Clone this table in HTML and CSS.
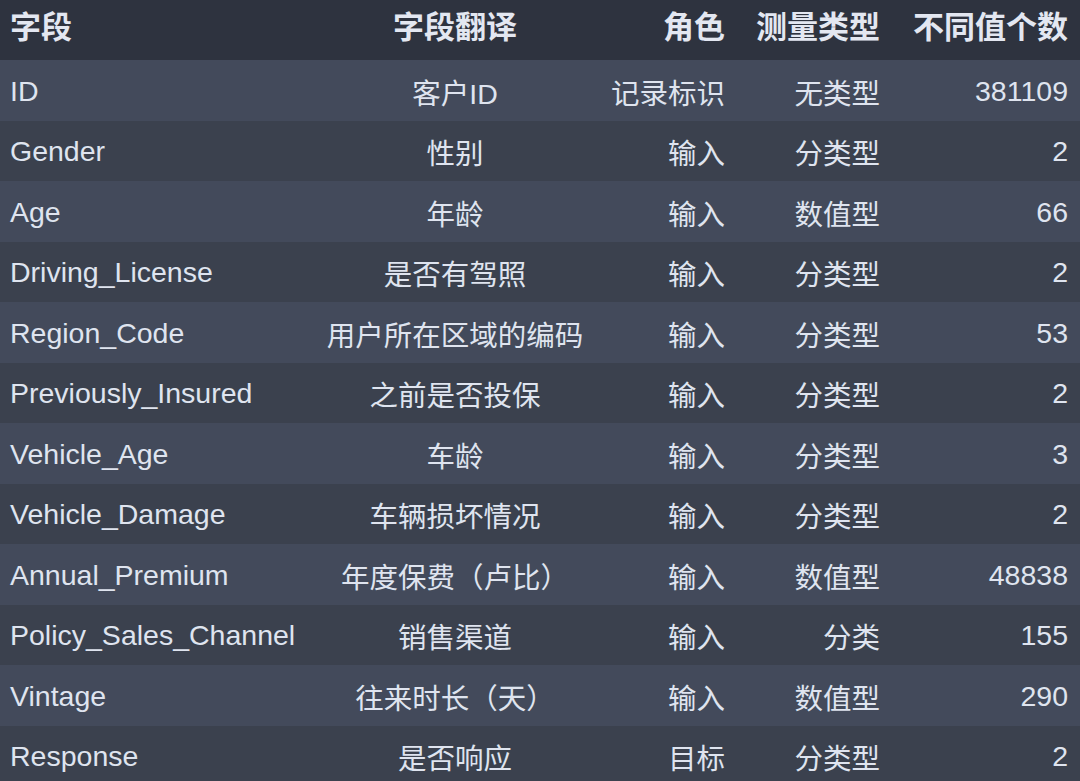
FILE: index.html
```html
<!DOCTYPE html>
<html lang="zh-CN">
<head>
<meta charset="utf-8">
<title>字段说明</title>
<link rel="stylesheet" href="styles.css">
</head>
<body>
<div class="table">
  <div class="row head">
    <div class="c1">字段</div><div class="c2">字段翻译</div><div class="c3">角色</div><div class="c4">测量类型</div><div class="c5">不同值个数</div>
  </div>
  <div class="row odd"><div class="c1">ID</div><div class="c2">客户ID</div><div class="c3">记录标识</div><div class="c4">无类型</div><div class="c5">381109</div></div>
  <div class="row even"><div class="c1">Gender</div><div class="c2">性别</div><div class="c3">输入</div><div class="c4">分类型</div><div class="c5">2</div></div>
  <div class="row odd"><div class="c1">Age</div><div class="c2">年龄</div><div class="c3">输入</div><div class="c4">数值型</div><div class="c5">66</div></div>
  <div class="row even"><div class="c1">Driving_License</div><div class="c2">是否有驾照</div><div class="c3">输入</div><div class="c4">分类型</div><div class="c5">2</div></div>
  <div class="row odd"><div class="c1">Region_Code</div><div class="c2">用户所在区域的编码</div><div class="c3">输入</div><div class="c4">分类型</div><div class="c5">53</div></div>
  <div class="row even"><div class="c1">Previously_Insured</div><div class="c2">之前是否投保</div><div class="c3">输入</div><div class="c4">分类型</div><div class="c5">2</div></div>
  <div class="row odd"><div class="c1">Vehicle_Age</div><div class="c2">车龄</div><div class="c3">输入</div><div class="c4">分类型</div><div class="c5">3</div></div>
  <div class="row even"><div class="c1">Vehicle_Damage</div><div class="c2">车辆损坏情况</div><div class="c3">输入</div><div class="c4">分类型</div><div class="c5">2</div></div>
  <div class="row odd"><div class="c1">Annual_Premium</div><div class="c2">年度保费（卢比）</div><div class="c3">输入</div><div class="c4">数值型</div><div class="c5">48838</div></div>
  <div class="row even"><div class="c1">Policy_Sales_Channel</div><div class="c2">销售渠道</div><div class="c3">输入</div><div class="c4">分类</div><div class="c5">155</div></div>
  <div class="row odd"><div class="c1">Vintage</div><div class="c2">往来时长（天）</div><div class="c3">输入</div><div class="c4">数值型</div><div class="c5">290</div></div>
  <div class="row even"><div class="c1">Response</div><div class="c2">是否响应</div><div class="c3">目标</div><div class="c4">分类型</div><div class="c5">2</div></div>
</div>
</body>
</html>
```
FILE: styles.css
```css
html, body {
  margin: 0;
  padding: 0;
  background: #3b414e;
  overflow: hidden;
}
.table {
  width: 1080px;
  font-family: "Liberation Sans", "Noto Sans CJK SC", sans-serif;
  font-size: 28.5px;
  color: #dfe4ef;
}
.row {
  display: grid;
  grid-template-columns: 310px 290px 137px 155px 188px;
  align-items: center;
  height: 60.5px;
  padding-top: 2px;
  box-sizing: border-box;
  white-space: nowrap;
}
.row.head {
  height: 60px;
  background: #2e333f;
  font-weight: bold;
  font-size: 31px;
  padding-top: 0;
  padding-bottom: 12px;
  color: #e3e7f1;
}
.row.odd { background: #434a5b; }
.row.even { background: #3b414e; }
.c1 { padding-left: 10px; text-align: left; }
.c2 { text-align: center; }
.c3, .c4, .c5 { text-align: right; padding-right: 12px; }
```
